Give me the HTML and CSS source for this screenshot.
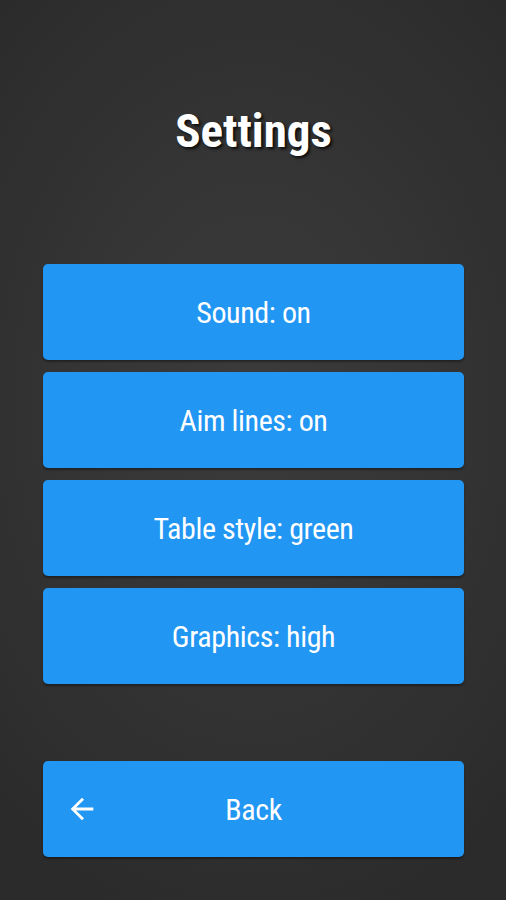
FILE: index.html
```html
<!DOCTYPE html>
<html>
<head>
<meta charset="utf-8">
<link rel="stylesheet" href="styles.css">
</head>
<body>
<div class="screen">
  <h1 class="title">Settings</h1>
  <div class="options">
    <button class="btn">Sound: on</button>
    <button class="btn">Aim lines: on</button>
    <button class="btn">Table style: green</button>
    <button class="btn">Graphics: high</button>
  </div>
  <button class="btn back">
    <svg class="back-icon" viewBox="0 0 24 24" width="34" height="34"><path d="M20 11H7.83l5.59-5.59L12 4l-8 8 8 8 1.41-1.41L7.83 13H20v-2z" fill="#fff"/></svg>
    <span>Back</span>
  </button>
</div>
</body>
</html>
```
FILE: styles.css
```css
html, body {
  margin: 0;
  padding: 0;
}
body {
  width: 506px;
  height: 900px;
  overflow: hidden;
  background: radial-gradient(ellipse 75% 60% at 50% 45%, #3b3b3b 0%, #343434 50%, #2b2b2b 100%);
  font-family: "Roboto", "Open Sans", sans-serif;
  font-stretch: 75%;
}
.screen {
  display: flex;
  flex-direction: column;
  align-items: center;
  padding: 0 42px 0 43px;
  height: 900px;
  box-sizing: border-box;
}
.title {
  margin: 97px 0 0;
  height: 67px;
  line-height: 67px;
  font-size: 47px;
  font-weight: bold;
  color: #fff;
  text-shadow: 2px 2px 3px rgba(0,0,0,0.8);
}
.options {
  margin-top: 100px;
  display: flex;
  flex-direction: column;
  gap: 12px;
  width: 100%;
}
.btn {
  width: 100%;
  height: 96px;
  border: none;
  border-radius: 5px;
  background: #2196f3;
  color: #fff;
  font-family: inherit;
  font-stretch: 75%;
  font-size: 30px;
  letter-spacing: -0.4px;
  box-shadow: 0 2px 2px rgba(0,0,0,0.35);
  padding: 0;
  display: flex;
  align-items: center;
  justify-content: center;
}
.back {
  margin-top: 77px;
  position: relative;
}
.back-icon {
  position: absolute;
  left: 22px;
  top: 31px;
}
```
